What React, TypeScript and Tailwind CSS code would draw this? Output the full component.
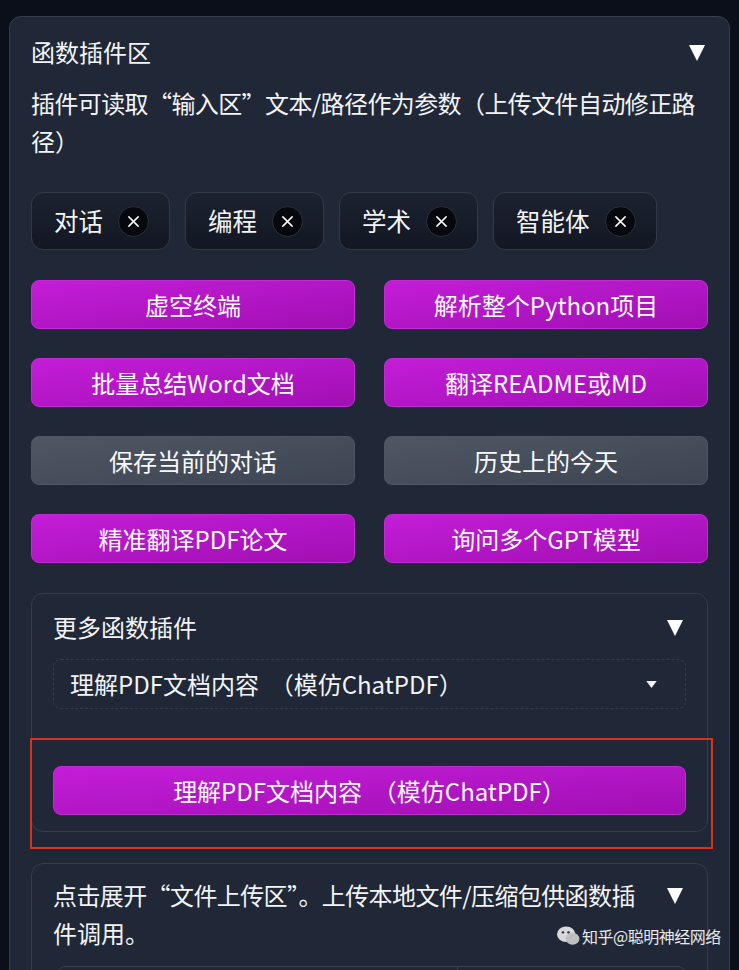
const font = { fontFamily: '"Noto Sans CJK SC", "Noto Sans", sans-serif' };

const Caret = ({ className = "" }: { className?: string }) => (
  <svg viewBox="0 0 18 18" className={className}>
    <polygon points="1,2 17,2 9,18" fill="#ffffff" />
  </svg>
);

const Tag = ({ label }: { label: string }) => (
  <div className="flex h-[58px] items-center gap-[15px] rounded-[12px] border border-[#323a48] bg-gradient-to-b from-[#1c2230] to-[#121722] pl-[22px] pr-[20px]">
    <span className="text-[24.5px] leading-none text-[#f3f4f6]">{label}</span>
    <span className="flex h-[31px] w-[31px] items-center justify-center rounded-full border border-[#2a303c] bg-[#06080d]">
      <svg viewBox="0 0 14 14" className="h-[13px] w-[13px]">
        <path d="M2 2 L12 12 M12 2 L2 12" stroke="#ffffff" strokeWidth="1.6" strokeLinecap="round" />
      </svg>
    </span>
  </div>
);

const Btn = ({ label, gray = false }: { label: string; gray?: boolean }) => (
  <div
    className={`flex h-[49px] items-center justify-center whitespace-pre rounded-[8px] border text-[24px] text-[#f9fafb] ${
      gray
        ? "border-[#4b5563] bg-gradient-to-br from-[#4f5765] to-[#3d4452]"
        : "border-[#c22ad6] bg-gradient-to-br from-[#c41dd8] to-[#a10fb3]"
    }`}
  >
    {label}
  </div>
);

export default function App() {
  return (
    <div className="min-h-screen bg-[#0b0f19] pl-[9px] pt-[16px]" style={font}>
      <div className="w-[721px] rounded-[12px] border border-[#363d4b] bg-[#202736] px-[21px] pt-[19px] pb-[40px]">
        <div className="flex h-[32px] items-center justify-between">
          <span className="text-[24px] text-[#f3f4f6]">函数插件区</span>
          <Caret className="mr-[2px] h-[18px] w-[18px]" />
        </div>
        <div className="mt-[16px] text-[24px] leading-[38px] text-[#f3f4f6]">
          <div className="whitespace-nowrap tracking-[-0.6px]">插件可读取“输入区”文本/路径作为参数（上传文件自动修正路</div>
          <div>径）</div>
        </div>

        <div className="mt-[32px] flex gap-[15px]">
          <Tag label="对话" />
          <Tag label="编程" />
          <Tag label="学术" />
          <Tag label="智能体" />
        </div>

        <div className="mt-[30px] grid grid-cols-2 gap-x-[29px] gap-y-[29px]">
          <Btn label="虚空终端" />
          <Btn label="解析整个Python项目" />
          <Btn label="批量总结Word文档" />
          <Btn label="翻译README或MD" />
          <Btn label="保存当前的对话" gray />
          <Btn label="历史上的今天" gray />
          <Btn label="精准翻译PDF论文" />
          <Btn label="询问多个GPT模型" />
        </div>

        <div className="relative mt-[30px] rounded-[12px] border border-[#343b49] px-[21px] pt-[17px] pb-[16px]">
          <div className="flex h-[32px] items-center justify-between">
            <span className="text-[24px] text-[#f3f4f6]">更多函数插件</span>
            <Caret className="mr-[2px] h-[18px] w-[18px]" />
          </div>
          <div className="mt-[16px] flex h-[50px] items-center justify-between rounded-[8px] border border-dashed border-[#353c4a] pl-[16px] pr-[28px]">
            <span className="whitespace-pre text-[24px] text-[#f3f4f6]">理解PDF文档内容  （模仿ChatPDF）</span>
            <svg viewBox="0 0 12 8" className="h-[7px] w-[11px]">
              <polygon points="0,0 12,0 6,8" fill="#f3f4f6" />
            </svg>
          </div>
          <div className="mt-[57px]">
            <Btn label="理解PDF文档内容  （模仿ChatPDF）" />
          </div>
          <div className="pointer-events-none absolute left-[-2px] top-[144px] h-[111px] w-[683px] border-2 border-[#d8321e]" />
        </div>

        <div className="relative mt-[31px] rounded-[12px] border border-[#343b49] px-[21px] pt-[12px] pb-[20px]">
          <div className="flex items-start justify-between">
            <div className="text-[24px] leading-[38px] text-[#f3f4f6]">
              <div className="whitespace-nowrap tracking-[-0.6px]">点击展开“文件上传区”。上传本地文件/压缩包供函数插</div>
              <div>件调用。</div>
            </div>
            <Caret className="mr-[2px] mt-[10px] h-[18px] w-[18px]" />
          </div>
          <div className="mt-[14px] ml-[4px] flex h-[40px] rounded-t-[8px] border border-[#3a4150]">
            <div className="w-[400px] border-r border-[#3a4150]" />
          </div>
          <div className="pointer-events-none absolute left-[524px] top-[58px] flex items-center gap-[2px] text-white/90">
            <svg viewBox="0 0 26 24" className="h-[22px] w-[24px]">
              <ellipse cx="11" cy="10" rx="10" ry="8.5" fill="#d9d9d9" />
              <ellipse cx="18" cy="15" rx="7.5" ry="6.5" fill="#bfbfbf" />
              <circle cx="7.5" cy="8" r="1.3" fill="#202736" />
              <circle cx="13.5" cy="8" r="1.3" fill="#202736" />
            </svg>
            <span className="whitespace-nowrap text-[16px] leading-[28px] tracking-[-0.5px]">知乎@聪明神经网络</span>
          </div>
        </div>
      </div>
    </div>
  );
}
